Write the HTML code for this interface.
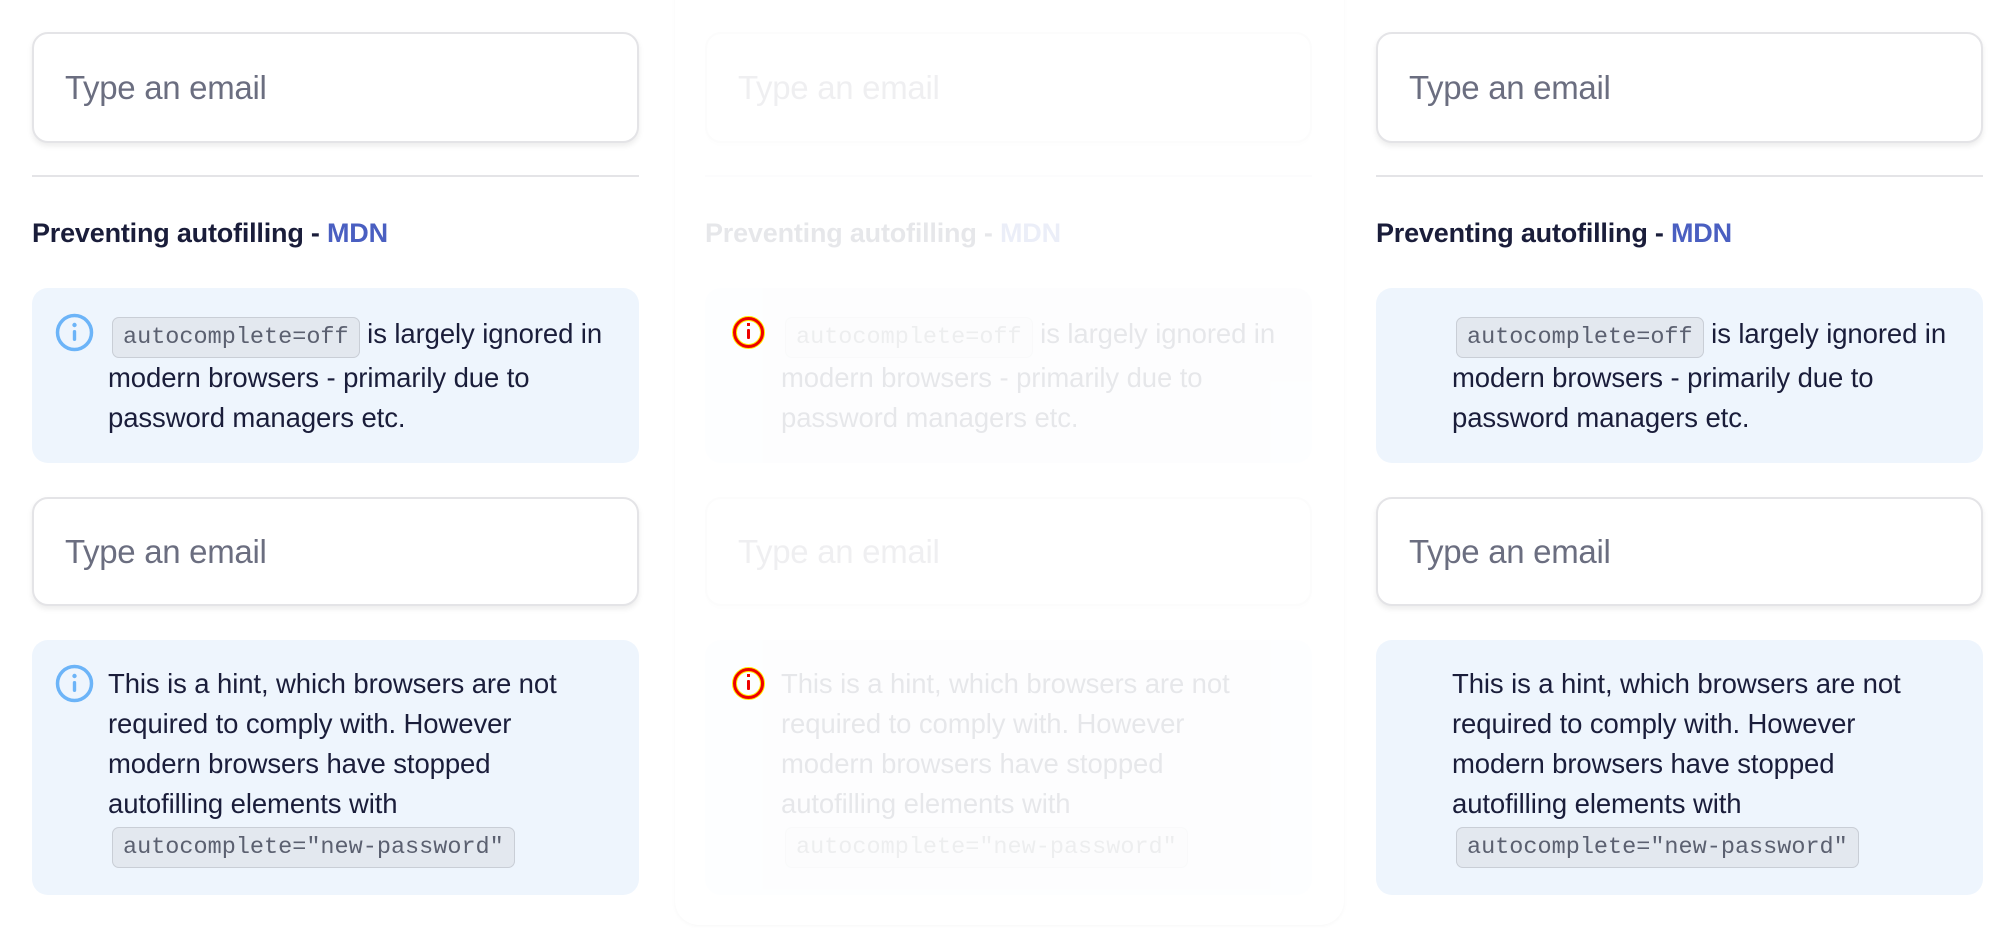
<!DOCTYPE html>
<html><head><meta charset="utf-8"><style>
*{box-sizing:border-box;margin:0;padding:0}
body{width:2016px;height:928px;background:#fff;position:relative;overflow:hidden;font-family:"Liberation Sans",sans-serif;color:#1a1d3a}
.col{position:absolute;top:0;width:607px;height:928px}
.inp{position:absolute;left:0;width:607px;background:#fff;border:2px solid #e4e4e7;border-radius:16px;box-shadow:0 3px 6px rgba(0,0,0,.08);font-size:33px;color:#6b6e80;padding-left:31px;display:flex;align-items:center;letter-spacing:-0.3px}
.div{position:absolute;left:0;top:175px;width:607px;height:2px;background:#e4e4e7}
.h{position:absolute;left:0;top:218px;font-size:27px;font-weight:bold;line-height:30px;letter-spacing:-0.2px;white-space:nowrap}
.h span{color:#4a5fc1}
.box{position:absolute;left:0;width:607px;background:#eef5fd;border-radius:16px;padding-left:76px;font-size:27.5px;line-height:40px;white-space:nowrap;letter-spacing:-0.1px}
code{font-family:"Liberation Mono","DejaVu Sans Mono",monospace;font-size:23.5px;letter-spacing:0;background:#e3e8ef;border:1.5px solid #c9ced6;border-radius:7px;padding:6px 10px;color:#5b6070;margin-left:4px}
.ic{position:absolute;left:23px;width:39px;height:39px}
.faint .inp,.faint .div,.faint .h,.faint .box{opacity:.1}
.card{position:absolute;left:675px;top:-30px;width:669px;height:955px;border-radius:24px;box-shadow:0 1px 4px rgba(0,0,0,.035);background:#fff}
</style></head><body>
<div class="card"></div>

<div class="col" style="left:32px">
 <div class="inp" style="top:32px;height:111px">Type an email</div>
 <div class="div"></div>
 <div class="h">Preventing autofilling - <span>MDN</span></div>
 <div class="box" style="top:288px;height:175px;padding-top:26px"><code>autocomplete=off</code> is largely ignored in<br>modern browsers - primarily due to<br>password managers etc.</div>
 <svg class="ic" style="top:313px" viewBox="0 0 39 39"><circle cx="19.5" cy="19.5" r="17" fill="none" stroke="#6cb4f8" stroke-width="3.5"/><circle cx="19.5" cy="12" r="2.2" fill="#6cb4f8"/><rect x="17.8" y="17" width="3.4" height="11" rx="1.7" fill="#6cb4f8"/></svg>
 <div class="inp" style="top:497px;height:109px">Type an email</div>
 <div class="box" style="top:640px;height:255px;padding-top:24px">This is a hint, which browsers are not<br>required to comply with. However<br>modern browsers have stopped<br>autofilling elements with<br><code>autocomplete="new-password"</code></div>
 <svg class="ic" style="top:664px" viewBox="0 0 39 39"><circle cx="19.5" cy="19.5" r="17" fill="none" stroke="#6cb4f8" stroke-width="3.5"/><circle cx="19.5" cy="12" r="2.2" fill="#6cb4f8"/><rect x="17.8" y="17" width="3.4" height="11" rx="1.7" fill="#6cb4f8"/></svg>
</div>

<div class="col faint" style="left:705px">
 <div class="inp" style="top:32px;height:111px">Type an email</div>
 <div class="div"></div>
 <div class="h">Preventing autofilling - <span>MDN</span></div>
 <div class="box" style="top:288px;height:175px;padding-top:26px"><code>autocomplete=off</code> is largely ignored in<br>modern browsers - primarily due to<br>password managers etc.</div>
 <svg class="ic" style="top:313px;left:24px" viewBox="0 0 39 39"><circle cx="19.5" cy="19.5" r="14" fill="none" stroke="#ffee00" stroke-width="5"/><circle cx="19.5" cy="19.5" r="14" fill="none" stroke="#ee0000" stroke-width="3"/><rect x="18" y="10" width="3" height="3" fill="#ee0000"/><rect x="18" y="16" width="3" height="10" rx="1" fill="#ee0000"/></svg>
 <div class="inp" style="top:497px;height:109px">Type an email</div>
 <div class="box" style="top:640px;height:255px;padding-top:24px">This is a hint, which browsers are not<br>required to comply with. However<br>modern browsers have stopped<br>autofilling elements with<br><code>autocomplete="new-password"</code></div>
 <svg class="ic" style="top:664px;left:24px" viewBox="0 0 39 39"><circle cx="19.5" cy="19.5" r="14" fill="none" stroke="#ffee00" stroke-width="5"/><circle cx="19.5" cy="19.5" r="14" fill="none" stroke="#ee0000" stroke-width="3"/><rect x="18" y="10" width="3" height="3" fill="#ee0000"/><rect x="18" y="16" width="3" height="10" rx="1" fill="#ee0000"/></svg>
</div>

<div class="col" style="left:1376px">
 <div class="inp" style="top:32px;height:111px">Type an email</div>
 <div class="div"></div>
 <div class="h">Preventing autofilling - <span>MDN</span></div>
 <div class="box" style="top:288px;height:175px;padding-top:26px"><code>autocomplete=off</code> is largely ignored in<br>modern browsers - primarily due to<br>password managers etc.</div>
 <div class="inp" style="top:497px;height:109px">Type an email</div>
 <div class="box" style="top:640px;height:255px;padding-top:24px">This is a hint, which browsers are not<br>required to comply with. However<br>modern browsers have stopped<br>autofilling elements with<br><code>autocomplete="new-password"</code></div>
</div>
</body></html>
